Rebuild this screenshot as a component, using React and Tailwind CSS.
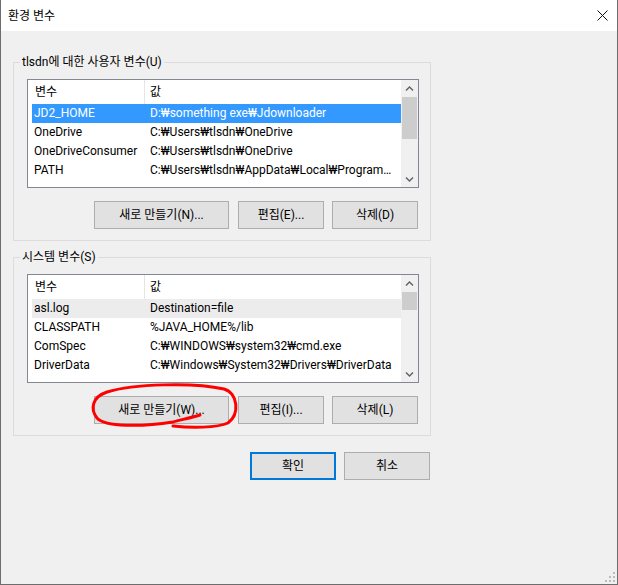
import React from "react";

const userVars = [
  ["JD2_HOME", "D:₩something exe₩Jdownloader"],
  ["OneDrive", "C:₩Users₩tlsdn₩OneDrive"],
  ["OneDriveConsumer", "C:₩Users₩tlsdn₩OneDrive"],
  ["PATH", "C:₩Users₩tlsdn₩AppData₩Local₩Programs₩Microsoft VS Code₩bin"],
];

const systemVars = [
  ["asl.log", "Destination=file"],
  ["CLASSPATH", "%JAVA_HOME%/lib"],
  ["ComSpec", "C:₩WINDOWS₩system32₩cmd.exe"],
  ["DriverData", "C:₩Windows₩System32₩Drivers₩DriverData"],
];

const Chevron = ({ down }) => (
  <svg width="9" height="6" viewBox="0 0 9 6">
    <path
      d={down ? "M1 1.5 L4.5 5 L8 1.5" : "M1 4.5 L4.5 1 L8 4.5"}
      fill="none"
      stroke="#606060"
      strokeWidth="1.4"
    />
  </svg>
);

const Button = ({ children, width, primary }) => (
  <button
    className={
      "h-[28px] bg-[#e1e1e1] text-[12px] text-black flex items-center justify-center " +
      (primary ? "border-2 border-[#0078d7] " : "border border-[#adadad] ") +
      width
    }
  >
    {children}
  </button>
);

const VarList = ({ rows, focused, thumbClass }) => (
  <div className="w-[392px] h-[109px] border border-[#828790] bg-white flex overflow-hidden">
    <div className="flex-1 pl-[4px] flex flex-col overflow-hidden">
      <div className="h-[24px] shrink-0 flex text-[12px] text-black">
        <div className="w-[113px] pl-[3px] border-r border-[#e5e5e5] flex items-center">변수</div>
        <div className="pl-[5px] flex items-center">값</div>
      </div>
      {rows.map(([name, value], i) => {
        const selected = i === 0;
        const rowBg = selected ? (focused ? "bg-[#3399ff] text-white" : "bg-[#ececec] text-black") : "text-black";
        return (
          <div key={name} className={"h-[19px] shrink-0 flex items-center text-[12px] leading-[19px] " + rowBg}>
            <div className="w-[112px] pl-[2px] whitespace-nowrap overflow-hidden">{name}</div>
            <div className="flex-1 min-w-0 pl-[6px] pr-[8px] truncate">{value}</div>
          </div>
        );
      })}
    </div>
    <div className="w-[17px] shrink-0 bg-[#f0f0f0] flex flex-col items-center">
      <div className="h-[17px] w-full flex items-center justify-center">
        <Chevron />
      </div>
      <div className={"w-[15px] bg-[#cdcdcd] " + thumbClass} />
      <div className="flex-1" />
      <div className="h-[17px] w-full flex items-center justify-center">
        <Chevron down />
      </div>
    </div>
  </div>
);

const Group = ({ label, rows, focused, thumbClass, buttons, className }) => (
  <fieldset className={"ml-[12px] w-[418px] border border-[#dcdcdc] " + className}>
    <legend className="ml-[6px] px-[2px] text-[12px] leading-[16px] text-black">{label}</legend>
    <div className="pl-[13px] pr-[11px] pt-[9px] pb-[11px]">
      <VarList rows={rows} focused={focused} thumbClass={thumbClass} />
      <div className="mt-[13px] mr-[1px] flex justify-end">
        <Button width="w-[135px]">{buttons[0]}</Button>
        <div className="w-[9px]" />
        <Button width="w-[86px]">{buttons[1]}</Button>
        <div className="w-[8px]" />
        <Button width="w-[86px]">{buttons[2]}</Button>
      </div>
    </div>
  </fieldset>
);

export default function App() {
  return (
    <div className="relative w-[618px] h-[585px] bg-[#f0f0f0] border-x border-b border-[#6d6d6d] flex flex-col overflow-hidden font-['Roboto','Noto_Sans_CJK_KR',sans-serif]">
      <div className="h-[31px] shrink-0 bg-white flex items-center justify-between pl-[7px] pr-[9px]">
        <span className="text-[12px] text-black">환경 변수</span>
        <svg width="11" height="11" viewBox="0 0 11 11">
          <path d="M0.5 0.5 L10.5 10.5 M10.5 0.5 L0.5 10.5" stroke="#111" strokeWidth="1" />
        </svg>
      </div>

      <Group
        className="mt-[23px]"
        label="tlsdn에 대한 사용자 변수(U)"
        rows={userVars}
        focused
        thumbClass="h-[42px]"
        buttons={["새로 만들기(N)...", "편집(E)...", "삭제(D)"]}
      />

      <Group
        className="mt-[8px]"
        label="시스템 변수(S)"
        rows={systemVars}
        focused={false}
        thumbClass="h-[18px]"
        buttons={["새로 만들기(W)...", "편집(I)...", "삭제(L)"]}
      />

      <div className="ml-[12px] w-[418px] mt-[16px] pr-[1px] flex justify-end gap-[8px]">
        <Button width="w-[86px]" primary>확인</Button>
        <Button width="w-[86px]">취소</Button>
      </div>

      {/* red marker drawn around the system "new" button */}
      <svg className="absolute left-0 top-0 pointer-events-none" width="618" height="585" viewBox="0 0 618 585">
        <path
          d="M199 415 C189 418 179 420 172 422 C140 427 104 427 96 418 C89 409 91 397 106 392 C132 384 192 382 223 389 C237 393 239 414 227 423 C216 428 190 428 172 426"
          fill="none"
          stroke="#ff0000"
          strokeWidth="3"
          strokeLinecap="round"
          strokeLinejoin="round"
        />
      </svg>

      {/* size grip */}
      <svg className="absolute right-[1px] bottom-[1px]" width="11" height="11" viewBox="0 0 11 11">
        <g fill="#bcbcbc">
          <rect x="8" y="0" width="2" height="2" />
          <rect x="4" y="4" width="2" height="2" />
          <rect x="8" y="4" width="2" height="2" />
          <rect x="0" y="8" width="2" height="2" />
          <rect x="4" y="8" width="2" height="2" />
          <rect x="8" y="8" width="2" height="2" />
        </g>
      </svg>
    </div>
  );
}
